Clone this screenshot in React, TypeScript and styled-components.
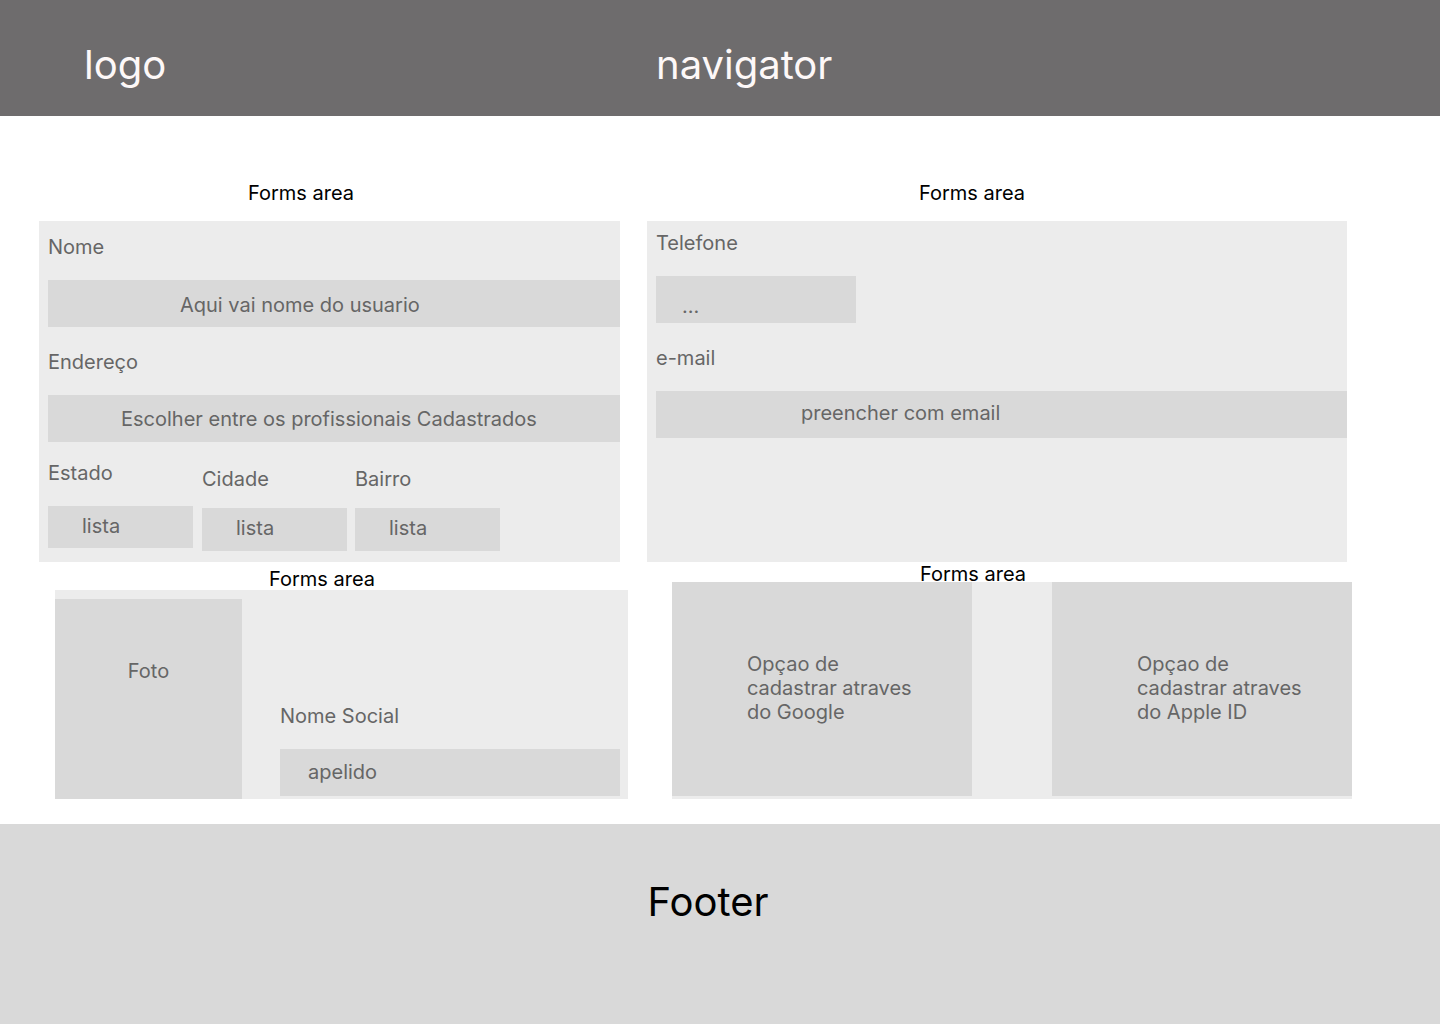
import React from "react";
import styled, { createGlobalStyle } from "styled-components";

const Global = createGlobalStyle`
  html, body { margin: 0; padding: 0; background: #ffffff; }
  body { font-family: Inter, "Noto Sans", sans-serif; }
  * { box-sizing: border-box; }
`;

const Page = styled.div`
  width: 1440px;
  min-height: 1024px;
  display: flex;
  flex-direction: column;
`;

const Header = styled.header`
  height: 116px;
  background: #6e6c6d;
  display: flex;
  align-items: center;
  color: #fdf8f8;
  font-size: 40px;
  line-height: 48px;
  padding-top: 14px;
`;

const Logo = styled.div`
  margin-left: 84px;
  width: 572px;
`;

const Nav = styled.nav``;

const Main = styled.main`
  padding-top: 65px;
  display: flex;
  flex-direction: column;
  gap: 1px;
`;

const Row = styled.div<{ $align?: string }>`
  display: flex;
  align-items: ${(p) => p.$align || "flex-start"};
`;

const Section = styled.section<{ $left: number; $width: number }>`
  margin-left: ${(p) => p.$left}px;
  width: ${(p) => p.$width}px;
  display: flex;
  flex-direction: column;
`;

const Title = styled.div<{ $indent: number; $lh?: number; $mb?: number }>`
  padding-left: ${(p) => p.$indent}px;
  font-size: 20px;
  line-height: ${(p) => p.$lh ?? 24}px;
  margin-bottom: ${(p) => p.$mb ?? 0}px;
  color: #000;
`;

const Panel = styled.div<{ $h: number; $pt?: number; $pl?: number }>`
  height: ${(p) => p.$h}px;
  background: #ececec;
  padding-top: ${(p) => p.$pt ?? 0}px;
  padding-left: ${(p) => p.$pl ?? 0}px;
  display: flex;
  flex-direction: column;
`;

const Label = styled.div<{ $mt?: number }>`
  font-size: 20px;
  line-height: 24px;
  color: #666666;
  margin-top: ${(p) => p.$mt ?? 0}px;
`;

const Field = styled.div<{ $w?: number; $h?: number; $pl: number; $mt?: number; $pt?: number }>`
  width: ${(p) => (p.$w ? `${p.$w}px` : "auto")};
  height: ${(p) => p.$h ?? 47}px;
  margin-top: ${(p) => p.$mt ?? 21}px;
  background: #d9d9d9;
  padding-left: ${(p) => p.$pl}px;
  padding-top: ${(p) => p.$pt ?? 12}px;
  font-size: 20px;
  line-height: 24px;
  color: #666666;
  white-space: nowrap;
`;

const ListRow = styled.div`
  display: flex;
  margin-top: 19px;
`;

const ListCol = styled.div<{ $offset: number; $gap: number }>`
  width: 145px;
  margin-left: ${(p) => p.$gap}px;
  padding-top: ${(p) => p.$offset}px;
  display: flex;
  flex-direction: column;
`;

const PhotoRow = styled.div`
  display: flex;
  height: 100%;
`;

const Photo = styled.div`
  width: 187px;
  height: 200px;
  background: #d9d9d9;
  padding-top: 60px;
  text-align: center;
  font-size: 20px;
  line-height: 24px;
  color: #666666;
`;

const SocialCol = styled.div`
  margin-left: 38px;
  width: 340px;
  padding-top: 105px;
  display: flex;
  flex-direction: column;
`;

const OptionRow = styled.div`
  display: flex;
  gap: 80px;
`;

const Option = styled.div<{ $pl: number }>`
  width: 300px;
  height: 214px;
  background: #d9d9d9;
  padding-top: 70px;
  padding-left: ${(p) => p.$pl}px;
  font-size: 20px;
  line-height: 24px;
  color: #666666;
`;

const Footer = styled.footer`
  margin-top: 25px;
  height: 200px;
  background: #d9d9d9;
  display: flex;
  justify-content: center;
  padding-top: 54px;
  padding-right: 24px;
  font-size: 40px;
  line-height: 48px;
  color: #000;
`;

const lists = [
  { label: "Estado", offset: 0, gap: 0, mt: 21, h: 42 },
  { label: "Cidade", offset: 6, gap: 9, mt: 17, h: 43 },
  { label: "Bairro", offset: 6, gap: 8, mt: 17, h: 43 },
];

export default function App() {
  return (
    <Page>
      <Global />
      <Header>
        <Logo>logo</Logo>
        <Nav>navigator</Nav>
      </Header>
      <Main>
        <Row>
          <Section $left={39} $width={581}>
            <Title $indent={209} $mb={16}>Forms area</Title>
            <Panel $h={341} $pt={14} $pl={9}>
              <Label>Nome</Label>
              <Field $pl={132} $pt={13}>Aqui vai nome do usuario</Field>
              <Label $mt={23}>Endereço</Label>
              <Field $pl={73}>Escolher entre os profissionais Cadastrados</Field>
              <ListRow>
                {lists.map((l) => (
                  <ListCol key={l.label} $offset={l.offset} $gap={l.gap}>
                    <Label>{l.label}</Label>
                    <Field $pl={34} $mt={l.mt} $h={l.h} $pt={8}>
                      lista
                    </Field>
                  </ListCol>
                ))}
              </ListRow>
            </Panel>
          </Section>
          <Section $left={27} $width={700}>
            <Title $indent={272} $mb={16}>Forms area</Title>
            <Panel $h={341} $pt={10} $pl={9}>
              <Label>Telefone</Label>
              <Field $w={200} $pl={26} $pt={18}>...</Field>
              <Label $mt={23}>e-mail</Label>
              <Field $pl={145} $pt={10}>preencher com email</Field>
            </Panel>
          </Section>
        </Row>
        <Row $align="flex-end">
          <Section $left={55} $width={573}>
            <Title $indent={214} $lh={22}>Forms area</Title>
            <Panel $h={209} $pt={9}>
              <PhotoRow>
                <Photo>Foto</Photo>
                <SocialCol>
                  <Label>Nome Social</Label>
                  <Field $pl={28} $mt={21} $pt={11}>apelido</Field>
                </SocialCol>
              </PhotoRow>
            </Panel>
          </Section>
          <Section $left={44} $width={680}>
            <Title $indent={248} $lh={22} $mb={-3}>Forms area</Title>
            <Panel $h={217}>
              <OptionRow>
                <Option $pl={75}>
                  Opçao de
                  <br />
                  cadastrar atraves
                  <br />
                  do Google
                </Option>
                <Option $pl={85}>
                  Opçao de
                  <br />
                  cadastrar atraves
                  <br />
                  do Apple ID
                </Option>
              </OptionRow>
            </Panel>
          </Section>
        </Row>
      </Main>
      <Footer>Footer</Footer>
    </Page>
  );
}
